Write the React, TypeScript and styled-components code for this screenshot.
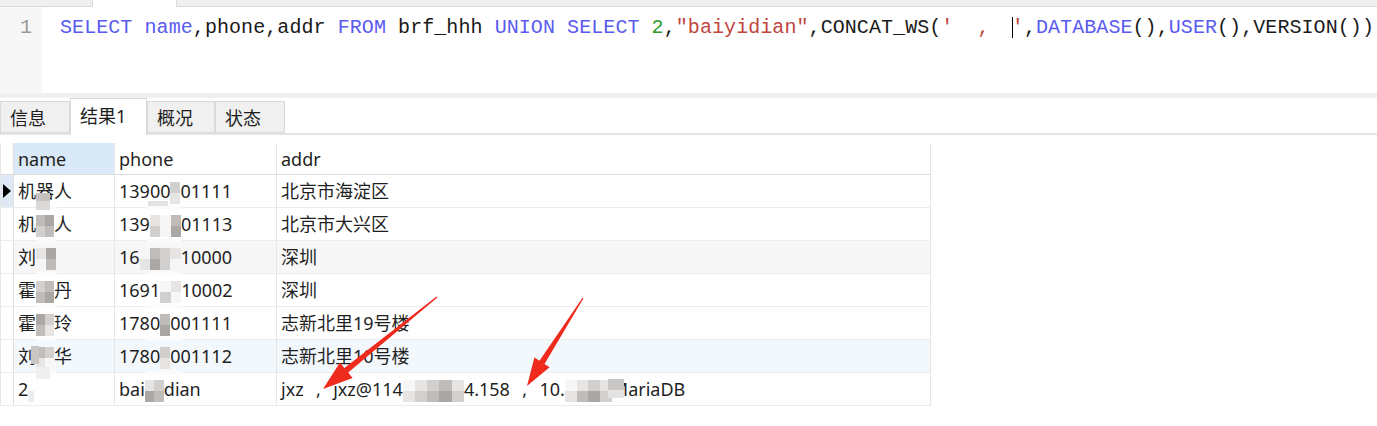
import React from "react";
import styled, { createGlobalStyle } from "styled-components";

const GlobalStyle = createGlobalStyle`
  html, body { margin: 0; padding: 0; background: #fff; }
  body { font-family: "Noto Sans", "Noto Sans CJK SC", sans-serif; }
`;

const Page = styled.div`
  width: 1377px;
  height: 426px;
  overflow: hidden;
  background: #fff;
  display: flex;
  flex-direction: column;
`;

/* ---------- top query tabs strip ---------- */
const TopStrip = styled.div`
  height: 7px;
  flex: none;
  display: flex;
  background: #f0f0f0;
`;
const TopTab = styled.div<{ $w?: number; $active?: boolean }>`
  box-sizing: border-box;
  ${(p) => (p.$w ? `width: ${p.$w}px;` : "flex: 1;")}
  background: ${(p) => (p.$active ? "#ffffff" : "#f0f0f0")};
  border-right: ${(p) => (p.$w ? "1px solid #dadada" : "none")};
  border-bottom: ${(p) => (p.$active ? "none" : "1px solid #dadada")};
`;

/* ---------- editor ---------- */
const Editor = styled.div`
  height: 86px;
  flex: none;
  display: flex;
  background: #fff;
`;
const Gutter = styled.div`
  width: 42px;
  box-sizing: border-box;
  background: #f7f7f7;
  color: #9a9a9a;
  font: 20px/22px "Liberation Mono", monospace;
  padding: 10px 10px 0 0;
  text-align: right;
`;
const Code = styled.div`
  padding: 10px 0 0 18px;
  font: 20px/22px "Liberation Mono", monospace;
  letter-spacing: 0.07px;
  white-space: pre;
  color: #1a1a1a;
`;
const tokenColor: Record<string, string> = {
  k: "#5a5af0",
  s: "#c0463e",
  n: "#2f9b2f",
  t: "#1a1a1a",
};
const Tok = styled.span<{ $kind: string }>`
  color: ${(p) => tokenColor[p.$kind]};
`;
const Caret = styled.span`
  display: inline-block;
  width: 1px;
  height: 21px;
  margin: 0 -1px 0 -2px;
  vertical-align: -5px;
  background: #000;
`;

const Separator = styled.div`
  height: 5px;
  flex: none;
  background: #f0f0f0;
`;

/* ---------- result tabs ---------- */
const TabBar = styled.div`
  height: 35px;
  flex: none;
  display: flex;
  align-items: flex-end;
  border-bottom: 2px solid #e4e4e4;
`;
const Tab = styled.div<{ $w: number; $active?: boolean }>`
  box-sizing: border-box;
  width: ${(p) => p.$w}px;
  height: ${(p) => (p.$active ? 37 : 32)}px;
  margin-bottom: ${(p) => (p.$active ? -2 : 0)}px;
  padding: ${(p) => (p.$active ? "0 0 4px 9px" : "0 0 0 9px")};
  display: flex;
  align-items: center;
  background: ${(p) => (p.$active ? "#ffffff" : "#f0f0f0")};
  border: 1px solid #d9d9d9;
  border-bottom: ${(p) => (p.$active ? "none" : "1px solid #d9d9d9")};
  font-size: 18px;
  color: #1e1e1e;
  position: relative;
`;

/* ---------- grid ---------- */
const GridWrap = styled.div`
  position: relative;
  width: 931px;
  margin-top: 8px;
`;
const GridRow = styled.div<{ $bg?: string; $header?: boolean }>`
  display: grid;
  grid-template-columns: 14px 101px 162px 654px;
  height: ${(p) => (p.$header ? 32 : 33)}px;
  box-sizing: border-box;
  background: ${(p) => p.$bg || "#fff"};
  border-bottom: 1px solid ${(p) => (p.$header ? "#dedede" : "#ececec")};
`;
const Cell = styled.div<{ $bg?: string; $wide?: boolean }>`
  box-sizing: border-box;
  border-right: 1px solid #e6e6e6;
  background: ${(p) => p.$bg || "transparent"};
  padding-left: 4px;
  font-size: 18px;
  line-height: 32px;
  color: #1f1f1f;
  white-space: pre;
  word-spacing: ${(p) => (p.$wide ? "1.5px" : "0")};
  overflow: hidden;
`;
const Indicator = styled.div<{ $current?: boolean }>`
  box-sizing: border-box;
  border-left: 1px solid #e6e6e6;
  border-right: 1px solid #dedede;
  background: ${(p) => (p.$current ? "#dfe9f5" : "#fff")};
  display: flex;
  align-items: center;
  padding-left: 2px;
`;
const Pointer = styled.span`
  width: 0;
  height: 0;
  border-left: 8px solid #000;
  border-top: 7px solid transparent;
  border-bottom: 7px solid transparent;
`;

const MosaicGrid = styled.span<{ $w: number; $cols: number }>`
  display: inline-grid;
  width: ${(p) => p.$w}px;
  height: 22px;
  grid-template-columns: repeat(${(p) => p.$cols}, 1fr);
  grid-auto-rows: 1fr;
  vertical-align: middle;
`;
const Pixel = styled.span<{ $c: string }>`
  background: ${(p) => p.$c};
`;

const Mosaic = ({ w, cols = 2, tones }: { w: number; cols?: number; tones: string[] }) => (
  <MosaicGrid $w={w} $cols={cols}>
    {tones.map((c, i) => (
      <Pixel key={i} $c={c} />
    ))}
  </MosaicGrid>
);

const Overlay = styled.svg`
  position: absolute;
  left: 0;
  top: 0;
  width: 931px;
  height: 263px;
  overflow: visible;
  pointer-events: none;
`;

type Part = string | { m: number; cols?: number; tones: string[] };
type RowData = { name: Part[]; phone: Part[]; addr: Part[]; bg?: string; current?: boolean; wide?: boolean };

const G1 = "#aaa7a5";
const G2 = "#bfbcba";
const G3 = "#d2d0cf";
const G4 = "#e6e5e4";
const W = "#f6f6f6";

const rows: RowData[] = [
  { name: ["机器人"], phone: ["13900", { m: 10, cols: 1, tones: [G3, G4] }, "01111"], addr: ["北京市海淀区"], current: true },
  { name: ["机", { m: 18, tones: [G2, G1, G3, G2] }, "人"], phone: ["139", { m: 31, cols: 3, tones: [G4, W, G2, G3, W, G1] }, "01113"], addr: ["北京市大兴区"] },
  { name: ["刘", { m: 20, tones: [G4, G1, W, G2] }], phone: ["16", { m: 41, cols: 4, tones: [W, G2, G3, G4, G4, G1, G3, W] }, "10000"], addr: ["深圳"], bg: "#f7f7f7" },
  { name: ["霍", { m: 18, tones: [G3, G2, G2, G1] }, "丹"], phone: ["1691", { m: 21, cols: 2, tones: [W, G4, G3, W] }, "10002"], addr: ["深圳"] },
  { name: ["霍", { m: 18, tones: [G1, G3, G2, G4] }, "玲"], phone: ["1780", { m: 10, cols: 1, tones: [G2, G1] }, "001111"], addr: ["志新北里19号楼"] },
  { name: ["刘", { m: 18, tones: [G2, G3, G4, W] }, "华"], phone: ["1780", { m: 10, cols: 1, tones: [G3, G4] }, "001112"], addr: ["志新北里10号楼"], bg: "#f3f8fd" },
  {
    name: ["2", { m: 6, cols: 1, tones: ["#fff", "#ededed"] }],
    phone: ["bai", { m: 19, cols: 2, tones: [G4, G3, G1, G2] }, "dian"],
    addr: [
      "jxz  ,  jxz@114",
      { m: 61, cols: 5, tones: [W, G4, G3, G2, G4, G4, G3, G2, G1, G3] },
      "4.158  ,  10.",
      { m: 47, cols: 4, tones: [W, G4, G3, G4, G4, G2, G1, G3] },
      "MariaDB",
    ],
    wide: true,
  },
];

const renderParts = (parts: Part[]) =>
  parts.map((p, i) =>
    typeof p === "string" ? <React.Fragment key={i}>{p}</React.Fragment> : <Mosaic key={i} w={p.m} cols={p.cols} tones={p.tones} />
  );

const codeTokens: [string, string][] = [
  ["k", "SELECT"], ["t", " "], ["k", "name"], ["t", ",phone,addr "], ["k", "FROM"], ["t", " brf_hhh "],
  ["k", "UNION"], ["t", " "], ["k", "SELECT"], ["t", " "], ["n", "2"], ["t", ","], ["s", '"baiyidian"'],
  ["t", ",CONCAT_WS("], ["s", "'  ,  "], ["c", ""], ["s", "'"], ["t", ","], ["k", "DATABASE"], ["t", "(),"],
  ["k", "USER"], ["t", "(),VERSION())"],
];

const boundaries = [207.5, 240.5, 273.5, 306.5, 339.5, 372.5];

export default function App() {
  return (
    <Page>
      <GlobalStyle />
      <TopStrip>
        <TopTab $w={93} />
        <TopTab $w={84} $active />
        <TopTab />
      </TopStrip>

      <Editor>
        <Gutter>1</Gutter>
        <Code>
          {codeTokens.map(([k, t], i) => (k === "c" ? <Caret key={i} /> : <Tok key={i} $kind={k}>{t}</Tok>))}
        </Code>
      </Editor>

      <Separator />

      <TabBar>
        <Tab $w={70}>信息</Tab>
        <Tab $w={77} $active>结果1</Tab>
        <Tab $w={68}>概况</Tab>
        <Tab $w={70}>状态</Tab>
      </TabBar>

      <GridWrap>
        <GridRow $header>
          <Indicator />
          <Cell $bg="#d9e9f8">name</Cell>
          <Cell>phone</Cell>
          <Cell>addr</Cell>
        </GridRow>
        {rows.map((r, i) => (
          <GridRow key={i} $bg={r.bg}>
            <Indicator $current={r.current}>{r.current && <Pointer />}</Indicator>
            <Cell>{renderParts(r.name)}</Cell>
            <Cell>{renderParts(r.phone)}</Cell>
            <Cell $wide={r.wide}>{renderParts(r.addr)}</Cell>
          </GridRow>
        ))}

        <Overlay viewBox="0 143 931 263">
          {/* redaction smear over row borders */}
          {boundaries.map((y) => (
            <g key={y}>
              <rect x={37} y={y - 2} width={20} height={4} fill="#fbfbfb" />
              <rect x={146} y={y - 2} width={36} height={4} fill="#fbfbfb" />
            </g>
          ))}
          <rect x={36} y={193} width={14} height={8} fill="#c4c1bf" />
          <rect x={36} y={201} width={14} height={9} fill="#dcdad9" />
          <rect x={148} y={201} width={20} height={5} fill="#e2e2e2" />
          <rect x={31} y={346} width={8} height={18} fill="#c9c7c5" />
          <rect x={36} y={367} width={14} height={12} fill="#efefef" />
          <rect x={608} y={379} width={16} height={11} fill="#c9c7c6" />
          <rect x={608} y={390} width={16} height={8} fill="#e4e3e2" />
          {/* red arrows */}
          <polygon
            points="437.4,297.5 348.2,372.5 352.6,378 323,389 340,362.4 344.4,367.9 436.6,296.5"
            fill="#ee2b1c"
          />
          <polygon
            points="583.5,298.3 544.5,364 549.6,367.2 527,386 534.4,357.6 539.5,360.8 582.5,297.7"
            fill="#ee2b1c"
          />
        </Overlay>
      </GridWrap>
    </Page>
  );
}
